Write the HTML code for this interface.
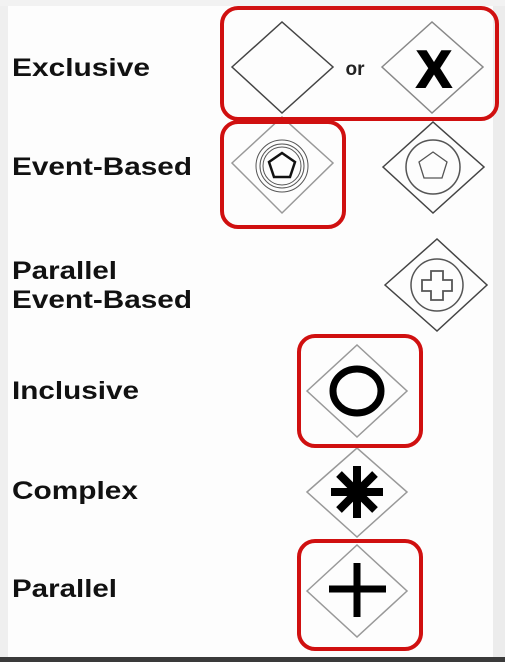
<!DOCTYPE html>
<html><head><style>
html,body{margin:0;padding:0;background:#fff;}
svg{display:block}
</style></head><body>
<svg width="505" height="662" viewBox="0 0 505 662" xmlns="http://www.w3.org/2000/svg">
<rect x="0" y="0" width="505" height="662" fill="#fdfdfd"/>
<rect x="0" y="0" width="8" height="662" fill="#efefef"/>
<rect x="493" y="0" width="12" height="662" fill="#ececec"/>
<rect x="0" y="0" width="505" height="6" fill="#f2f2f2"/>
<rect x="0" y="657" width="505" height="5" fill="#3a3a3a"/>
<g font-family="Liberation Sans, Arial, sans-serif" font-weight="bold" font-size="25" fill="#111">
<text x="12" y="76" textLength="138" lengthAdjust="spacingAndGlyphs">Exclusive</text>
<text x="12" y="175" textLength="180" lengthAdjust="spacingAndGlyphs">Event-Based</text>
<text x="12" y="279" textLength="105" lengthAdjust="spacingAndGlyphs">Parallel</text>
<text x="12" y="308" textLength="180" lengthAdjust="spacingAndGlyphs">Event-Based</text>
<text x="12" y="399" textLength="127" lengthAdjust="spacingAndGlyphs">Inclusive</text>
<text x="12" y="499" textLength="126" lengthAdjust="spacingAndGlyphs">Complex</text>
<text x="12" y="597" textLength="105" lengthAdjust="spacingAndGlyphs">Parallel</text>
</g>
<g fill="none" stroke-width="1.5">
<path d="M232 67 L282 22 L333 67 L282 113 Z" stroke="#444"/>
<path d="M382 67 L432 22 L483 67 L432 113 Z" stroke="#888"/>
<path d="M232 163 L282 117 L333 163 L282 213 Z" stroke="#999"/>
<path d="M383 167 L433 122 L484 167 L433 213 Z" stroke="#444"/>
<path d="M385 285 L437 239 L487 285 L437 331 Z" stroke="#444"/>
<path d="M307 391 L357 345 L407 391 L357 437 Z" stroke="#999"/>
<path d="M307 492 L357 448 L407 492 L357 537 Z" stroke="#999"/>
<path d="M307 591 L357 545 L407 591 L357 637 Z" stroke="#999"/>
</g>
<text x="355" y="75" font-family="Liberation Sans, Arial, sans-serif" font-weight="bold" font-size="19" fill="#222" text-anchor="middle">or</text>
<text x="434" y="87" font-family="Liberation Sans, Arial, sans-serif" font-weight="bold" font-size="52" fill="#000" stroke="#000" stroke-width="2" text-anchor="middle">X</text>
<g fill="none" stroke="#555">
<circle cx="282" cy="166" r="26" stroke-width="1"/>
<circle cx="282" cy="166" r="22" stroke-width="1"/>
<circle cx="282" cy="166" r="19" stroke-width="1"/>
<path d="M282 153 L295 162 L290 177 L274 177 L269 162 Z" stroke="#111" stroke-width="2.5"/>
<circle cx="433" cy="167" r="27" stroke-width="1.5"/>
<path d="M433 152 L447 162 L442 178 L424 178 L419 162 Z" stroke-width="1.3"/>
<circle cx="437" cy="285" r="26" stroke-width="1.5"/>
<path d="M431 271 h12 v9 h9 v11 h-9 v9 h-12 v-9 h-9 v-11 h9 Z" stroke-width="1.8"/>
</g>
<ellipse cx="357" cy="391" rx="24" ry="22" fill="none" stroke="#000" stroke-width="7"/>
<g stroke="#000" stroke-width="8">
<line x1="357" y1="466" x2="357" y2="518"/>
<line x1="331" y1="492" x2="383" y2="492"/>
<line x1="339" y1="474" x2="375" y2="510"/>
<line x1="375" y1="474" x2="339" y2="510"/>
</g>
<g stroke="#000" stroke-width="7">
<line x1="357" y1="563" x2="357" y2="617"/>
<line x1="329" y1="589" x2="386" y2="589"/>
</g>
<g fill="none" stroke="#d01010" stroke-width="4">
<rect x="222" y="8" width="275" height="111" rx="16"/>
<rect x="222" y="122" width="122" height="105" rx="16"/>
<rect x="299" y="336" width="122" height="110" rx="16"/>
<rect x="299" y="541" width="122" height="108" rx="16"/>
</g>
</svg>
</body></html>
